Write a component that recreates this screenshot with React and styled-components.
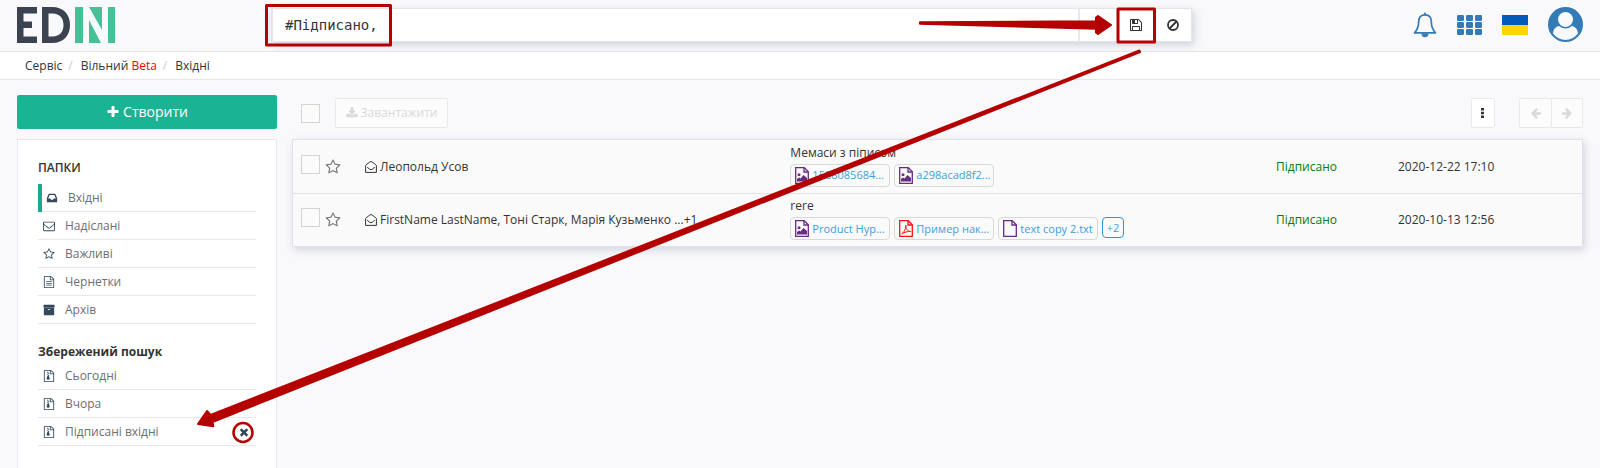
import React from "react";
import styled, { createGlobalStyle } from "styled-components";

const GlobalStyle = createGlobalStyle`
  * { box-sizing: border-box; }
  body {
    margin: 0;
    background: #f9f9fb;
    color: #333;
    font-family: "Open Sans", "Noto Sans", sans-serif;
    font-size: 12px;
    line-height: 16px;
  }
  button, input { font: inherit; color: inherit; }
  a { color: inherit; text-decoration: none; }
`;

const ICONS = {
  plus: "M1600 736v192q0 40-28 68t-68 28h-416v416q0 40-28 68t-68 28h-192q-40 0-68-28t-28-68v-416h-416q-40 0-68-28t-28-68v-192q0-40 28-68t68-28h416v-416q0-40 28-68t68-28h192q40 0 68 28t28 68v416h416q40 0 68 28t28 68z",
  download:
    "M1344 1344q0-26-19-45t-45-19-45 19-19 45 19 45 45 19 45-19 19-45zm256 0q0-26-19-45t-45-19-45 19-19 45 19 45 45 19 45-19 19-45zm128-224v320q0 40-28 68t-68 28h-1472q-40 0-68-28t-28-68v-320q0-40 28-68t68-28h465l135 136q58 56 136 56t136-56l136-136h464q40 0 68 28t28 68zm-325-569q17 41-14 70l-448 448q-18 19-45 19t-45-19l-448-448q-31-29-14-70 17-39 59-39h256v-448q0-26 19-45t45-19h256q26 0 45 19t19 45v448h256q42 0 59 39z",
  save: "M512 1536h768v-384h-768v384zm896 0h128v-896q0-14-10-38.500t-20-34.500l-281-281q-10-10-34-20t-39-10v416q0 40-28 68t-68 28h-576q-40 0-68-28t-28-68v-416h-128v1280h128v-416q0-40 28-68t68-28h832q40 0 68 28t28 68v416zm-384-928v-320q0-13-9.500-22.500t-22.500-9.500h-192q-13 0-22.500 9.500t-9.500 22.500v320q0 13 9.500 22.500t22.500 9.500h192q13 0 22.500-9.500t9.500-22.500zm640 32v928q0 40-28 68t-68 28h-1344q-40 0-68-28t-28-68v-1344q0-40 28-68t68-28h928q40 0 88 20t76 48l280 280q28 28 48 76t20 88z",
  envelope:
    "M1664 1504v-768q-32 36-69 66-268 206-426 338-51 43-83 67t-86.500 48.500-102.500 24.500h-2q-48 0-102.500-24.500t-86.500-48.500-83-67q-158-132-426-338-37-30-69-66v768q0 13 9.500 22.500t22.500 9.500h1472q13 0 22.500-9.500t9.500-22.500zm0-1051v-24.500l-.5-13-3-12.500-5.500-9-9-7.500-14-2.500h-1472q-13 0-22.500 9.500t-9.500 22.500q0 168 147 284 193 152 401 317 6 5 35 29.500t46 37.500 44.500 31.500 50.500 27.500 43 9h2q20 0 43-9t50.500-27.500 44.500-31.500 46-37.500 35-29.500q208-165 401-317 54-43 100.500-115.500t46.500-131.500zm128-37v1088q0 66-47 113t-113 47h-1472q-66 0-113-47t-47-113v-1088q0-66 47-113t113-47h1472q66 0 113 47t47 113z",
  star: "M1201 1004l306-297-422-62-189-382-189 382-422 62 306 297-73 421 378-199 377 199zm527-357q0 22-26 48l-363 354 86 500q1 7 1 20 0 50-41 50-19 0-40-12l-449-236-449 236q-22 12-40 12-21 0-31.500-14.500t-10.500-35.500q0-6 2-20l86-500-364-354q-25-27-25-48 0-37 56-46l502-73 225-455q19-41 49-41t49 41l225 455 502 73q56 9 56 46z",
  file: "M1596 380q28 28 48 76t20 88v1152q0 40-28 68t-68 28h-1344q-40 0-68-28t-28-68v-1600q0-40 28-68t68-28h896q40 0 88 20t76 48zm-444-244v376h376q-10-29-22-41l-313-313q-12-12-41-22zm384 1528v-1024h-416q-40 0-68-28t-28-68v-416h-768v1536h1280z",
  times:
    "M1490 1322q0 40-28 68l-136 136q-28 28-68 28t-68-28l-294-294-294 294q-28 28-68 28t-68-28l-136-136q-28-28-28-68t28-68l294-294-294-294q-28-28-28-68t28-68l136-136q28-28 68-28t68 28l294 294 294-294q28-28 68-28t68 28l136 136q28 28 28 68t-28 68l-294 294 294 294q28 28 28 68z",
  arrow:
    "M1664 896v128q0 53-32.500 90.500t-84.500 37.500h-704l293 294q38 36 38 90t-38 90l-75 76q-37 37-90 37-52 0-91-37l-651-652q-37-37-37-90 0-52 37-91l651-650q38-38 91-38 52 0 90 38l75 74q38 38 38 91t-38 91l-293 293h704q52 0 84.500 37.500t32.500 90.500z",
  archive:
    "M1088 832q0-26-19-45t-45-19h-256q-26 0-45 19t-19 45 19 45 45 19h256q26 0 45-19t19-45zm576-192v960q0 26-19 45t-45 19h-1408q-26 0-45-19t-19-45v-960q0-26 19-45t45-19h1408q26 0 45 19t19 45zm64-448v256q0 26-19 45t-45 19h-1536q-26 0-45-19t-19-45v-256q0-26 19-45t45-19h1536q26 0 45 19t19 45z",
  inbox:
    "M1151 960h316q-1-3-2.500-8t-2.500-8l-212-496h-708l-212 496q-1 2-2.500 8t-2.500 8h316l95 192h320zm513 30v482q0 26-19 45t-45 19h-1408q-26 0-45-19t-19-45v-482q0-62 25-123l238-552q10-25 36.500-42t52.500-17h832q26 0 52.500 17t36.500 42l238 552q25 61 25 123z",
};

const Svg = styled.svg`
  display: block;
  flex: none;
  width: ${(p) => p.$size || 12}px;
  height: ${(p) => p.$size || 12}px;
  fill: currentColor;
  overflow: visible;
`;

function Icon({ name, size, flip, children }) {
  return (
    <Svg $size={size} viewBox="0 0 1792 1792" aria-hidden="true">
      <g transform={flip ? "translate(1792 0) scale(-1 1)" : undefined}>
        <path d={ICONS[name]} />
      </g>
      {children}
    </Svg>
  );
}

const DocIcon = () => (
  <Icon name="file">
    <path d="M480 780h832v130h-832zM480 1040h832v130h-832zM480 1300h832v130h-832z" />
  </Icon>
);

const ZipIcon = () => (
  <Icon name="file">
    <path d="M620 250h150v150h-150zM770 400h150v150h-150zM620 550h150v150h-150zM770 700h150v150h-150zM660 850h220l120 420q0 200-230 200t-230-200z" />
  </Icon>
);

const FILE_COLOR = { image: "#662d83", pdf: "#ff1010", text: "#662d83" };

const FileSvg = styled.svg`
  display: block;
  flex: none;
  width: 14px;
  height: 17px;
  color: ${(p) => FILE_COLOR[p.$kind]};
`;

function FileIcon({ kind }) {
  return (
    <FileSvg $kind={kind} viewBox="0 0 14 17" fill="none" stroke="currentColor" strokeWidth="1.3" aria-hidden="true">
      <path d="M.7.7h8.500l4.100 4.100v11.500h-12.600z" />
      <path d="M9 .7v4.300h4.300" />
      {kind === "image" && (
        <path d="M2 14.500v-2.500l2-1.500 1.500 1 3-3.500 3.500 3v3.500zM2.700 6.500h2.600v2.600h-2.600z" fill="currentColor" stroke="none" />
      )}
      {kind === "pdf" && (
        <path d="M2.800 13.800c2-1 4-4.500 4-8.500 0 3.500 2 6.200 4.800 6.200-3 0-6 .5-8.800 2.300z" strokeWidth="1" />
      )}
    </FileSvg>
  );
}

const OpenEnvelope = () => (
  <Svg $size={12} viewBox="0 0 12 12" aria-hidden="true">
    <path
      d="M.6 4.800q0-.6.6-1l3.600-2.800q1.200-.8 2.400 0l3.600 2.800q.6.400.6 1v6.600h-10.800zM2.200 6.200l2.600 2.100q1.200.8 2.400 0l2.600-2.100"
      fill="none"
      stroke="currentColor"
    />
  </Svg>
);

const Page = styled.div`
  position: relative;
  display: flex;
  flex-direction: column;
  min-height: 100vh;
`;

const Header = styled.header`
  display: flex;
  align-items: center;
  height: 52px;
  padding: 0 17px 2px;
  border-bottom: 1px solid #e7e7e9;
`;

const LogoLink = styled.a`
  flex: none;
  width: 254px;
  svg { display: block; }
`;

const SearchBox = styled.form`
  display: flex;
  flex: 1;
  height: 34px;
  background: #fff;
  border: 1px solid #e3e5ea;
  border-left-width: 2px;
  box-shadow: 2px 3px 8px rgba(60, 70, 110, 0.22);
`;

const SearchInput = styled.input`
  flex: 1;
  min-width: 0;
  padding: 0 12px;
  border: 0;
  border-right: 2px solid #e7e8ec;
  outline: 0;
  background: transparent;
  font-family: "DejaVu Sans Mono", monospace;
  font-size: 14px;
`;

const SearchButton = styled.button`
  display: flex;
  align-items: center;
  justify-content: center;
  width: 37px;
  padding: 0;
  border: 0;
  background: transparent;
`;

const HeaderTools = styled.div`
  display: flex;
  flex: none;
  align-items: center;
  justify-content: flex-end;
  gap: 20px;
  width: 391px;
  color: #337ab7;
`;

const ToolButton = styled.button`
  display: block;
  padding: 0;
  border: 0;
  background: transparent;
  svg { display: block; }
`;

const Flag = styled.span`
  display: block;
  width: 26px;
  height: 20px;
  background: linear-gradient(#005bbb 50%, #ffd500 50%);
`;

const Breadcrumb = styled.nav`
  display: flex;
  align-items: center;
  height: 28px;
  padding: 0 25px;
  background: #fff;
  border-bottom: 1px solid #e7e7e9;
`;

const Slash = styled.span`
  margin: 0 8px 0 6px;
  color: #ccc;
`;

const Beta = styled.span`
  color: #f00;
`;

const Content = styled.div`
  display: flex;
  flex: 1;
  gap: 15px;
  padding: 15px 17px 0;
`;

const Sidebar = styled.aside`
  display: flex;
  flex: none;
  flex-direction: column;
  gap: 10px;
  width: 260px;
`;

const CreateButton = styled.button`
  display: flex;
  align-items: center;
  justify-content: center;
  gap: 3px;
  height: 34px;
  border: 0;
  border-radius: 2px;
  background: #1ab394;
  color: #fff;
  font-size: 14px;
`;

const SidePanel = styled.div`
  flex: 1;
  padding: 20px 20px 22px;
  background: #fff;
  border: 1px solid #e4e6f0;
  border-bottom: 0;
`;

const SideTitle = styled.h2`
  margin: 0;
  padding-bottom: ${(p) => (p.$tight ? 2 : 8)}px;
  font-size: 12px;
  line-height: 16px;
  font-weight: ${(p) => (p.$bold ? 700 : 600)};
`;

const FolderList = styled.ul`
  margin: 0 0 20px;
  padding: 0;
  list-style: none;
`;

const FolderRow = styled.li`
  display: flex;
  align-items: center;
  justify-content: space-between;
  height: 28px;
  padding-right: 6px;
  border-bottom: 1px solid #e7e8ea;
`;

const FolderLink = styled.a`
  display: flex;
  align-items: center;
  gap: 10px;
  height: 28px;
  padding-left: ${(p) => (p.$active ? 4 : 5)}px;
  border-left: ${(p) => (p.$active ? "4px solid #19aa8d" : "0")};
  color: #6d6f71;
  svg { color: #34495e; }
`;

const RemoveButton = styled.button`
  padding: 0;
  border: 0;
  background: transparent;
  color: #34495e;
`;

const Main = styled.main`
  flex: 1;
  min-width: 0;
`;

const Toolbar = styled.div`
  display: flex;
  align-items: center;
  height: 36px;
  margin-bottom: 8px;
  padding-left: 9px;
`;

const Check = styled.input.attrs({ type: "checkbox" })`
  appearance: none;
  flex: none;
  width: 19px;
  height: 19px;
  margin: 0;
  border: 1px solid #d6d4ce;
  background: #fbfbfb;
`;

const ToolbarButton = styled.button`
  display: flex;
  align-items: center;
  justify-content: center;
  gap: 3px;
  width: ${(p) => p.$width}px;
  height: 30px;
  padding: 0;
  border: 1px solid #e7eaec;
  border-radius: 2px;
  background: #fff;
  color: #333;
  &:disabled {
    background: #fcfcfd;
    color: #d9d9da;
  }
`;

const DownloadButton = styled(ToolbarButton)`
  margin: 0 auto 0 15px;
`;

const Pager = styled.div`
  display: flex;
  margin-left: 24px;
  button + button { margin-left: -1px; }
`;

const Mail = styled.table`
  width: 100%;
  table-layout: fixed;
  border-collapse: separate;
  border-spacing: 0;
  background: #fafafa;
  border: 1px solid #e0e2e6;
  box-shadow: 2px 3px 8px rgba(60, 70, 110, 0.2);
`;

const MailRow = styled.tr`
  & + & td { border-top: 1px solid #dfe1e3; }
`;

const Cell = styled.td`
  height: 53px;
  padding: 0;
  vertical-align: middle;
`;

const FileCell = styled(Cell)`
  padding-bottom: 2px;
`;

const Col = styled.col`
  width: ${(p) => p.$width};
`;

const Marks = styled.div`
  display: flex;
  align-items: center;
  gap: 5px;
  padding-left: 8px;
  color: #777;
  input { margin-bottom: 5px; }
`;

const Sender = styled.div`
  display: flex;
  align-items: center;
  gap: 3px;
  white-space: nowrap;
`;

const Status = styled.span`
  color: #0a7a0a;
`;

const Files = styled.div`
  display: flex;
  gap: 4px;
  margin-top: 3px;
`;

const FileChip = styled.a`
  display: flex;
  align-items: center;
  gap: 3px;
  width: ${(p) => (p.$cut ? "100px" : "auto")};
  height: 23px;
  padding: 0 4px;
  border: 1px solid #d6d8da;
  border-radius: 4px;
  color: #3aa0dc;
  font-size: 11px;
  white-space: nowrap;
`;

const MoreFiles = styled.a`
  height: 21px;
  padding: 2px 4px;
  border: 1px solid #2a96d8;
  border-radius: 4px;
  color: #3aa0dc;
  font-size: 11px;
`;

const Annotations = styled.svg`
  position: absolute;
  top: 0;
  left: 0;
  pointer-events: none;
`;

const folders = [
  { label: "Вхідні", icon: <Icon name="inbox" />, active: true },
  { label: "Надіслані", icon: <Icon name="envelope" /> },
  { label: "Важливі", icon: <Icon name="star" /> },
  { label: "Чернетки", icon: <DocIcon /> },
  { label: "Архів", icon: <Icon name="archive" /> },
];

const searches = [
  { label: "Сьогодні" },
  { label: "Вчора" },
  { label: "Підписані вхідні", removable: true },
];

const mails = [
  {
    from: "Леопольд Усов",
    subject: "Мемаси з піписом",
    files: [
      { kind: "image", name: "1588085684...", cut: true },
      { kind: "image", name: "a298acad8f2...", cut: true },
    ],
    date: "2020-12-22 17:10",
  },
  {
    from: "FirstName LastName, Тоні Старк, Марія Кузьменко ...+1",
    subject: "rere",
    files: [
      { kind: "image", name: "Product Hyp...", cut: true },
      { kind: "pdf", name: "Пример нак...", cut: true },
      { kind: "text", name: "text copy 2.txt" },
    ],
    more: "+2",
    date: "2020-10-13 12:56",
  },
];

function Logo() {
  return (
    <svg width="98" height="36" viewBox="0 0 98 36" aria-hidden="true">
      <path fill="#3a434f" d="M0 0h20v6.500h-13.500v8h8.500v6.500h-8.500v8.500h13.500v6.500h-20z" />
      <path fill="#3a434f" fillRule="evenodd" d="M25 0h10c12 0 18 8 18 18s-6 18-18 18h-10zm6.500 6.500v23h4c7.500 0 11-5 11-11.500s-3.500-11.500-11-11.500z" />
      <path fill="#48c096" d="M58 0h8v36h-8zM72 0h13v23zM72 13l12 23h-12zM91 0h7v36h-7z" />
    </svg>
  );
}

function Bell() {
  return (
    <svg width="24" height="26" viewBox="0 0 24 26" fill="none" stroke="currentColor" aria-hidden="true">
      <path strokeWidth="1.700" strokeLinejoin="round" d="M12 2.800c-4.500 0-6.300 3-6.300 6.800 0 5.200-1.400 8.400-4.200 11.200h21c-2.800-2.800-4.200-6-4.200-11.200 0-3.800-1.800-6.800-6.300-6.800z" />
      <path strokeWidth="2" strokeLinecap="round" d="M12 1.500v1" />
      <path fill="currentColor" stroke="none" d="M8.500 21.500h7a3.500 3.800 0 0 1-7 0z" />
    </svg>
  );
}

function GridIcon() {
  return (
    <svg width="25" height="20" viewBox="0 0 25 20" fill="currentColor" aria-hidden="true">
      {[0, 7, 14].map((y) =>
        [0, 9, 18].map((x) => <rect key={`${x}-${y}`} x={x} y={y} width="7" height="6" rx="1.200" />)
      )}
    </svg>
  );
}

function Avatar() {
  return (
    <svg width="35" height="35" viewBox="0 0 35 35" aria-hidden="true">
      <circle cx="17.500" cy="17.500" r="17.500" fill="currentColor" />
      <circle cx="17.500" cy="12.500" r="7.500" fill="#f9f9fb" />
      <path fill="#f9f9fb" d="M11 19q6.500 5 13 0c3.700.7 5.600 3.500 6 7.500q-5 6.500-12.500 6.500t-12.500-6.500c.4-4 2.300-6.800 6-7.500z" />
    </svg>
  );
}

function Attachment({ file }) {
  return (
    <FileChip href="#" $cut={file.cut}>
      <FileIcon kind={file.kind} />
      {file.name}
    </FileChip>
  );
}

export default function App() {
  return (
    <Page>
      <GlobalStyle />
      <Header>
        <LogoLink href="#" aria-label="EDIN"><Logo /></LogoLink>
        <SearchBox>
          <SearchInput aria-label="Пошук" defaultValue="#Підписано," />
          <SearchButton type="button" aria-label="Пошук">
            <svg width="12" height="12" viewBox="0 0 14 14" fill="none" stroke="currentColor" strokeWidth="2" aria-hidden="true">
              <circle cx="6" cy="6" r="4.500" />
              <path d="M9 9l3 3" />
            </svg>
          </SearchButton>
          <SearchButton type="button" aria-label="Зберегти"><Icon name="save" size={14} /></SearchButton>
          <SearchButton type="button" aria-label="Очистити">
            <svg width="12" height="12" viewBox="0 0 12 12" fill="none" stroke="currentColor" strokeWidth="1.800" aria-hidden="true">
              <circle cx="6" cy="6" r="5" />
              <path d="M9.500 2.500l-7 7" />
            </svg>
          </SearchButton>
        </SearchBox>
        <HeaderTools>
          <ToolButton type="button" aria-label="Сповіщення"><Bell /></ToolButton>
          <ToolButton type="button" aria-label="Сервіси"><GridIcon /></ToolButton>
          <ToolButton type="button" aria-label="Мова"><Flag /></ToolButton>
          <ToolButton type="button" aria-label="Профіль"><Avatar /></ToolButton>
        </HeaderTools>
      </Header>

      <Breadcrumb>
        <a href="#">Сервіс</a>
        <Slash>/</Slash>
        <a href="#">Вільний <Beta>Beta</Beta></a>
        <Slash>/</Slash>
        <a href="#">Вхідні</a>
      </Breadcrumb>

      <Content>
        <Sidebar>
          <CreateButton type="button"><Icon name="plus" size={14} />Створити</CreateButton>
          <SidePanel>
            <SideTitle>ПАПКИ</SideTitle>
            <FolderList>
              {folders.map((f) => (
                <FolderRow key={f.label}>
                  <FolderLink href="#" $active={f.active}>{f.icon}{f.label}</FolderLink>
                </FolderRow>
              ))}
            </FolderList>
            <SideTitle $bold $tight>Збережений пошук</SideTitle>
            <FolderList>
              {searches.map((s) => (
                <FolderRow key={s.label}>
                  <FolderLink href="#"><ZipIcon />{s.label}</FolderLink>
                  {s.removable && (
                    <RemoveButton type="button" aria-label="Видалити"><Icon name="times" size={12} /></RemoveButton>
                  )}
                </FolderRow>
              ))}
            </FolderList>
          </SidePanel>
        </Sidebar>

        <Main>
          <Toolbar>
            <Check aria-label="Вибрати всі" />
            <DownloadButton type="button" disabled $width={113}><Icon name="download" />Завантажити</DownloadButton>
            <ToolbarButton type="button" aria-label="Ще" $width={24}>
              <svg width="4" height="10" viewBox="0 0 4 10" fill="currentColor" aria-hidden="true">
                <path d="M0 0h3v2.500h-3zM0 3.700h3v2.500h-3zM0 7.400h3v2.500h-3z" />
              </svg>
            </ToolbarButton>
            <Pager>
              <ToolbarButton type="button" disabled aria-label="Назад" $width={33}><Icon name="arrow" /></ToolbarButton>
              <ToolbarButton type="button" disabled aria-label="Вперед" $width={32}><Icon name="arrow" flip /></ToolbarButton>
            </Pager>
          </Toolbar>

          <Mail>
            <colgroup>
              <Col $width="72px" />
              <Col $width="33%" />
              <Col />
              <Col $width="122px" />
              <Col $width="184px" />
            </colgroup>
            <tbody>
              {mails.map((m) => (
                <MailRow key={m.date}>
                  <Cell>
                    <Marks>
                      <Check aria-label={`Вибрати: ${m.subject}`} />
                      <ToolButton type="button" aria-label="Важливе"><Icon name="star" size={16} /></ToolButton>
                    </Marks>
                  </Cell>
                  <Cell><Sender><OpenEnvelope />{m.from}</Sender></Cell>
                  <FileCell>
                    {m.subject}
                    <Files>
                      {m.files.map((f) => <Attachment key={f.name} file={f} />)}
                      {m.more && <MoreFiles href="#">{m.more}</MoreFiles>}
                    </Files>
                  </FileCell>
                  <Cell><Status>Підписано</Status></Cell>
                  <Cell>{m.date}</Cell>
                </MailRow>
              ))}
            </tbody>
          </Mail>
        </Main>
      </Content>

      <Annotations width="1160" height="460" viewBox="0 0 1160 460" aria-hidden="true">
        <g fill="none" stroke="#b40000" strokeWidth="3" strokeLinejoin="round">
          <rect x="266.500" y="5.500" width="124" height="39.500" />
          <rect x="1118" y="9" width="36.500" height="33" />
          <circle cx="243" cy="432.500" r="9.500" strokeWidth="2.500" />
        </g>
        <g fill="#b40000" stroke="#b40000" strokeWidth="2" strokeLinejoin="round">
          <path d="M920 22.200v1.600l176 5v3.700l2 1.500 13-9-13-9-2 1.500v3.700z" />
          <path d="M1139.500 50.500l.6 1.500-927.600 370 .8 4.300-15.300-2.300 9-13 3.500 4z" />
        </g>
      </Annotations>
    </Page>
  );
}
